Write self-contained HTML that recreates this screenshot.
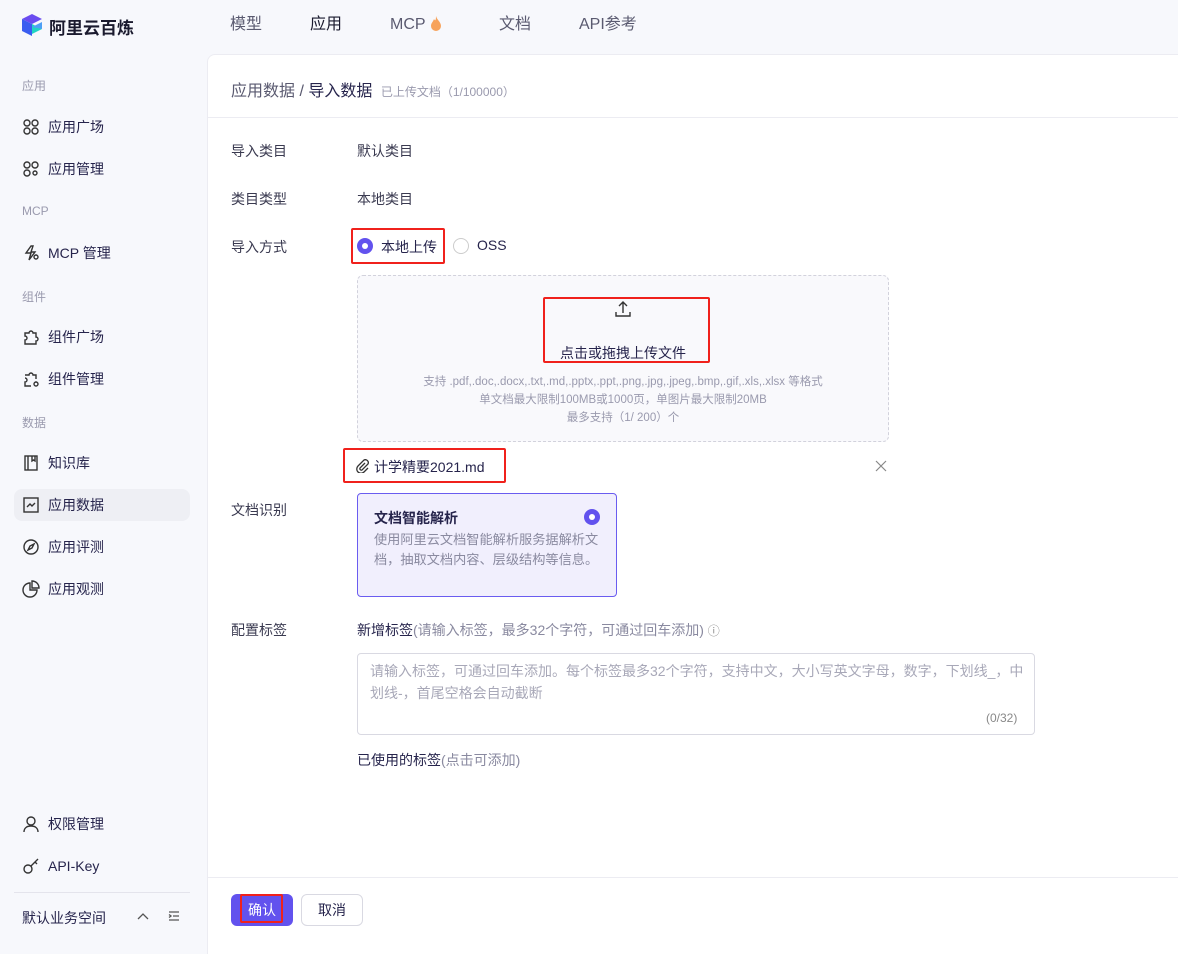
<!DOCTYPE html>
<html><head><meta charset="utf-8"><style>
*{margin:0;padding:0;box-sizing:border-box}
body{width:1178px;height:938px;overflow:hidden;background:#f7f8fc;font-family:"Liberation Sans","Noto Sans CJK SC",sans-serif;color:#26244c;position:relative;font-size:14px}
.a{position:absolute;white-space:nowrap}
.nav{font-size:16px;color:#5a5a70;top:14px;line-height:22px;height:22px}
.sec{font-size:12px;color:#9a9aae;left:22px}
.it{left:22px;font-size:14px;color:#26244c;display:flex;align-items:center;gap:8px;height:20px}
.it svg{width:18px;height:18px}
.lbl{left:231px;color:#3a3a50}
.val{left:357px;color:#3a3a50}
.red{position:absolute;border:2px solid #f0211c;border-radius:2px}
</style></head><body>
<!-- header -->
<svg class="a" style="left:21px;top:13px" width="22" height="24" viewBox="0 0 22 24"><path d="M11 1 21 6 11 11 1 6Z" fill="#6a4cf0"/><path d="M1 6 11 11V23L1 18Z" fill="#3a5df0"/><path d="M11 11 21 16 11 21Z" fill="#20d4c4"/><path d="M11 14 21 9V16Z" fill="#4fa0f5"/></svg>
<div class="a" style="left:49px;top:14px;font-size:17px;font-weight:bold;color:#1a1a2e">阿里云百炼</div>
<div class="a nav" style="left:230px">模型</div>
<div class="a nav" style="left:310px;color:#1a1a2e">应用</div>
<div class="a nav" style="left:390px">MCP <svg width="12" height="16" viewBox="0 0 12 16" style="vertical-align:-2px"><path d="M6 1C7 5 11 7 11 11a5 5 0 0 1-10 0C1 8 3 7 4 4c1 2 2 2 2-3Z" fill="#f7a35c"/></svg></div>
<div class="a nav" style="left:499px">文档</div>
<div class="a nav" style="left:579px">API参考</div>
<!-- sidebar -->
<div class="a sec" style="top:77px">应用</div>
<div class="a it" style="top:117px"><svg viewBox="0 0 18 18" fill="none" stroke="#333" stroke-width="1.4"><circle cx="5" cy="5" r="3"/><circle cx="13" cy="5" r="3"/><circle cx="5" cy="13" r="3"/><circle cx="13" cy="13" r="3"/></svg>应用广场</div>
<div class="a it" style="top:159px"><svg viewBox="0 0 18 18" fill="none" stroke="#333" stroke-width="1.4"><circle cx="5" cy="5" r="3"/><circle cx="13" cy="5" r="3"/><circle cx="5" cy="13" r="3"/><circle cx="13" cy="13" r="2"/></svg>应用管理</div>
<div class="a sec" style="top:204px">MCP</div>
<div class="a it" style="top:243px"><svg viewBox="0 0 18 18" fill="none" stroke="#333" stroke-width="1.4"><path d="M9 2 4 9h5l-2 7 6-8H9l2-6Z"/><circle cx="14" cy="13" r="2"/></svg>MCP 管理</div>
<div class="a sec" style="top:288px">组件</div>
<div class="a it" style="top:327px"><svg viewBox="0 0 18 18" fill="none" stroke="#333" stroke-width="1.4"><path d="M3 5h4a2 2 0 1 1 4 0h3v4a2 2 0 1 1 0 4v3H3v-4a2 2 0 1 0 0-4Z"/></svg>组件广场</div>
<div class="a it" style="top:369px"><svg viewBox="0 0 18 18" fill="none" stroke="#333" stroke-width="1.4"><path d="M3 5h4a2 2 0 1 1 4 0h3v4M9 16H3v-4a2 2 0 1 0 0-4"/><circle cx="14" cy="14" r="2"/></svg>组件管理</div>
<div class="a sec" style="top:414px">数据</div>
<div class="a it" style="top:453px"><svg viewBox="0 0 18 18" fill="none" stroke="#333" stroke-width="1.4"><rect x="3" y="2" width="12" height="14"/><path d="M6 2v14M10 2v5l1.5-1 1.5 1V2"/></svg>知识库</div>
<div class="a" style="left:14px;top:489px;width:176px;height:32px;background:#eeeff4;border-radius:8px"></div>
<div class="a it" style="top:495px"><svg viewBox="0 0 18 18" fill="none" stroke="#333" stroke-width="1.4"><rect x="2" y="2" width="14" height="14"/><path d="M5 11l3-3 2 2 3-3"/></svg>应用数据</div>
<div class="a it" style="top:537px"><svg viewBox="0 0 18 18" fill="none" stroke="#333" stroke-width="1.4"><circle cx="9" cy="9" r="7"/><path d="M12 6l-2 4-4 2 2-4Z"/></svg>应用评测</div>
<div class="a it" style="top:579px"><svg viewBox="0 0 18 18" fill="none" stroke="#333" stroke-width="1.4"><path d="M8 3a7 7 0 1 0 7 7H8Z"/><path d="M10 1a7 7 0 0 1 7 7h-7Z"/></svg>应用观测</div>
<div class="a it" style="top:814px"><svg viewBox="0 0 18 18" fill="none" stroke="#333" stroke-width="1.4"><circle cx="9" cy="6" r="4"/><path d="M2 17c0-4 3-6 7-6s7 2 7 6"/></svg>权限管理</div>
<div class="a it" style="top:856px"><svg viewBox="0 0 18 18" fill="none" stroke="#333" stroke-width="1.4"><circle cx="6" cy="12" r="4"/><path d="M9 9l7-7M13 5l2 2"/></svg>API-Key</div>
<div class="a" style="left:14px;top:892px;width:176px;height:1px;background:#e4e4ec"></div>
<div class="a" style="left:22px;top:908px;color:#26244c">默认业务空间</div>
<svg class="a" style="left:137px;top:912px" width="12" height="8" viewBox="0 0 12 8" fill="none" stroke="#555" stroke-width="1.3"><path d="M1 7 6 2l5 5"/></svg>
<svg class="a" style="left:168px;top:910px" width="12" height="12" viewBox="0 0 12 12" fill="none" stroke="#555" stroke-width="1.3"><path d="M1 2h10M5 6h6M1 10h10M1 4.5 3 6 1 7.5"/></svg>
<!-- main panel -->
<div class="a" style="left:207px;top:54px;width:990px;height:900px;background:#fff;border:1px solid #ececf2;border-bottom:none;border-radius:8px 0 0 0"></div>
<div class="a" style="left:231px;top:77px;font-size:16px;color:#5a5a70">应用数据 / <span style="color:#26244c">导入数据</span> <span style="font-size:12px;color:#9a9aae;margin-left:4px">已上传文档（1/100000）</span></div>
<div class="a" style="left:208px;top:117px;width:970px;height:1px;background:#ececf2"></div>
<div class="a lbl" style="top:141px">导入类目</div><div class="a val" style="top:141px">默认类目</div>
<div class="a lbl" style="top:189px">类目类型</div><div class="a val" style="top:189px">本地类目</div>
<div class="a lbl" style="top:237px">导入方式</div>
<div class="a" style="left:357px;top:238px;width:16px;height:16px;border-radius:50%;background:#6252ee"><div style="margin:5px;width:6px;height:6px;border-radius:50%;background:#fff"></div></div>
<div class="a" style="left:381px;top:237px;color:#26244c">本地上传</div>
<div class="a" style="left:453px;top:238px;width:16px;height:16px;border-radius:50%;border:1px solid #ccc"></div>
<div class="a" style="left:477px;top:237px;color:#26244c">OSS</div>
<div class="red" style="left:351px;top:228px;width:94px;height:36px"></div>
<div class="a" style="left:357px;top:275px;width:532px;height:167px;border:1px dashed #d2d2dc;border-radius:6px;background:#f9f9fc"></div>
<svg class="a" style="left:614px;top:300px" width="18" height="18" viewBox="0 0 18 18" fill="none" stroke="#333" stroke-width="1.4"><path d="M9 13V2M5 6l4-4 4 4M2 12v4h14v-4"/></svg>
<div class="a" style="left:560px;top:343px;color:#26244c">点击或拖拽上传文件</div>
<div class="red" style="left:543px;top:297px;width:167px;height:66px"></div>
<div class="a" style="left:357px;width:532px;top:373px;text-align:center;font-size:11.5px;line-height:18px;color:#9a9aae">支持 .pdf,.doc,.docx,.txt,.md,.pptx,.ppt,.png,.jpg,.jpeg,.bmp,.gif,.xls,.xlsx 等格式<br>单文档最大限制100MB或1000页，单图片最大限制20MB<br>最多支持（1/ 200）个</div>
<svg class="a" style="left:356px;top:459px" width="14" height="14" viewBox="0 0 14 14" fill="none" stroke="#333" stroke-width="1.3"><path d="M9 4 4 9a1.5 1.5 0 0 0 2 2l6-6a3 3 0 0 0-4-4L2 7a4 4 0 0 0 6 6l4-4"/></svg>
<div class="a" style="left:374px;top:457px;color:#26244c">计学精要2021.md</div>
<div class="red" style="left:343px;top:448px;width:163px;height:35px"></div>
<svg class="a" style="left:875px;top:460px" width="12" height="12" viewBox="0 0 12 12" stroke="#888" stroke-width="1.2"><path d="M1 1l10 10M11 1 1 11"/></svg>
<div class="a lbl" style="top:500px">文档识别</div>
<div class="a" style="left:357px;top:493px;width:260px;height:104px;border:1px solid #6a5cf0;border-radius:4px;background:#f1effd"></div>
<div class="a" style="left:374px;top:508px;font-size:14px;font-weight:600;color:#26244c">文档智能解析</div>
<div class="a" style="left:584px;top:509px;width:16px;height:16px;border-radius:50%;background:#6252ee"><div style="margin:5px;width:6px;height:6px;border-radius:50%;background:#fff"></div></div>
<div class="a" style="left:374px;top:530px;width:235px;white-space:normal;font-size:13.2px;line-height:20px;color:#8a8aa0;word-break:break-all">使用阿里云文档智能解析服务据解析文档，抽取文档内容、层级结构等信息。</div>
<div class="a lbl" style="top:620px">配置标签</div>
<div class="a" style="left:357px;top:620px;color:#26244c">新增标签<span style="color:#8a8aa0">(请输入标签，最多32个字符，可通过回车添加)</span> <span style="font-size:12px;color:#888">ⓘ</span></div>
<div class="a" style="left:357px;top:653px;width:678px;height:82px;border:1px solid #d9d9e2;border-radius:4px"></div>
<div class="a" style="left:370px;top:660px;width:660px;white-space:normal;color:#a8a8b8;line-height:22px">请输入标签，可通过回车添加。每个标签最多32个字符，支持中文，大小写英文字母，数字，下划线_，中划线-，首尾空格会自动截断</div>
<div class="a" style="left:986px;top:711px;font-size:12px;color:#888">(0/32)</div>
<div class="a" style="left:357px;top:750px;color:#26244c">已使用的标签<span style="color:#8a8aa0">(点击可添加)</span></div>
<div class="a" style="left:208px;top:877px;width:970px;height:1px;background:#ececf2"></div>
<div class="a" style="left:231px;top:894px;width:62px;height:32px;background:#6252ee;border-radius:6px;color:#fff;text-align:center;line-height:32px">确认</div>
<div class="red" style="left:240px;top:894px;width:43px;height:29px"></div>
<div class="a" style="left:301px;top:894px;width:62px;height:32px;border:1px solid #d9d9e2;border-radius:6px;color:#26244c;text-align:center;line-height:30px">取消</div>
</body></html>
